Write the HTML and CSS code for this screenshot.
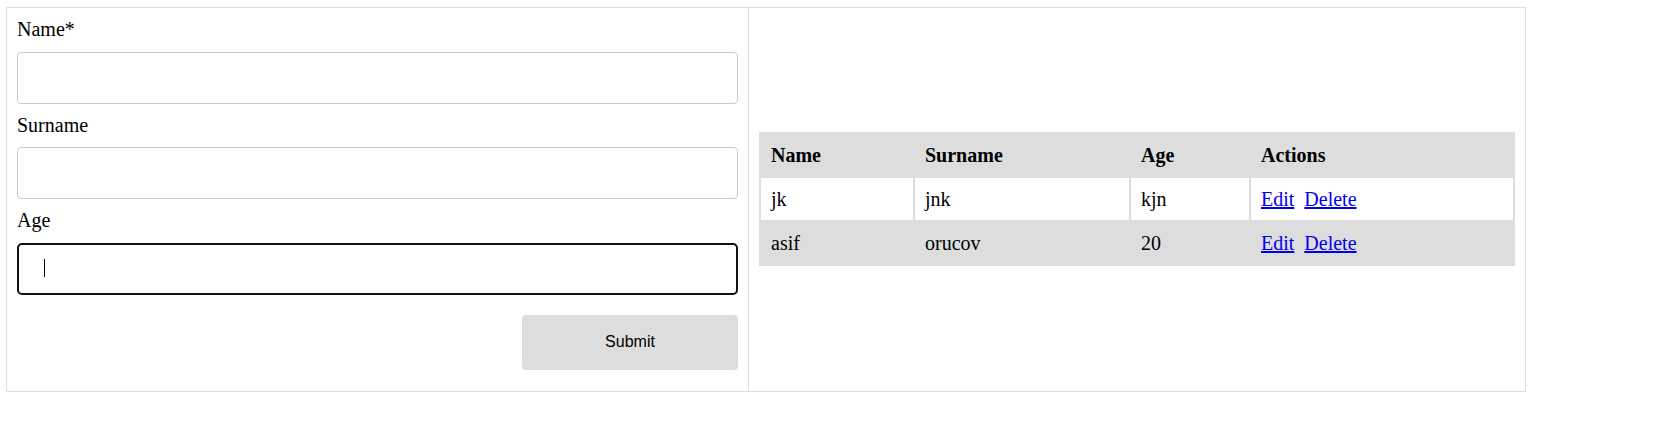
FILE: index.html
```html
<!DOCTYPE html>
<html lang="en">
<head>
<meta charset="utf-8">
<title>Users</title>
<link rel="stylesheet" href="styles.css">
</head>
<body>
<div class="container">
  <form class="form-col">
    <label class="field-label" for="name">Name*</label>
    <input class="field-input" id="name" type="text">
    <label class="field-label" for="surname">Surname</label>
    <input class="field-input" id="surname" type="text">
    <label class="field-label" for="age">Age</label>
    <div class="field-wrap">
      <input class="field-input field-input--focused" id="age" type="text">
      <span class="caret"></span>
    </div>
    <div class="actions-row">
      <button class="submit-btn" type="button">Submit</button>
    </div>
  </form>
  <div class="table-col">
    <table class="users-table">
      <thead>
        <tr>
          <th class="col-name">Name</th>
          <th class="col-surname">Surname</th>
          <th class="col-age">Age</th>
          <th>Actions</th>
        </tr>
      </thead>
      <tbody>
        <tr>
          <td>jk</td>
          <td>jnk</td>
          <td>kjn</td>
          <td><a href="#" class="row-link">Edit</a> <a href="#" class="row-link">Delete</a></td>
        </tr>
        <tr>
          <td>asif</td>
          <td>orucov</td>
          <td>20</td>
          <td><a href="#" class="row-link">Edit</a> <a href="#" class="row-link">Delete</a></td>
        </tr>
      </tbody>
    </table>
  </div>
</div>
</body>
</html>
```

FILE: styles.css
```css
html, body {
  margin: 0;
  padding: 0;
  background: #fff;
}

body {
  font-family: "Liberation Serif", "Times New Roman", serif;
  font-size: 20px;
  color: #000;
}

.container {
  display: flex;
  width: 1520px;
  box-sizing: border-box;
  margin: 7px 0 0 6px;
  border: 1px solid #dddddd;
}

.form-col {
  width: 742px;
  box-sizing: border-box;
  padding: 10px 10px 21px 10px;
  border-right: 1px solid #dddddd;
  display: flex;
  flex-direction: column;
  margin: 0;
}

.field-label {
  display: block;
  line-height: 23.5px;
  margin-bottom: 10px;
}

.field-input {
  display: block;
  width: 100%;
  height: 52px;
  box-sizing: border-box;
  margin: 0 0 10px 0;
  padding: 0 25px;
  border: 1px solid #cccccc;
  border-radius: 4px;
  font-family: "Liberation Serif", serif;
  font-size: 20px;
  background: #fff;
}

.field-wrap {
  position: relative;
}

.field-input--focused {
  border: 2px solid #111111;
  border-radius: 5px;
  margin-bottom: 0;
  outline: none;
}

.caret {
  position: absolute;
  left: 27px;
  top: 16px;
  width: 1px;
  height: 18px;
  background: #000;
}

.actions-row {
  display: flex;
  justify-content: flex-end;
  margin-top: 20px;
}

.submit-btn {
  width: 216px;
  height: 55px;
  border: none;
  border-radius: 4px;
  background: #dddddd;
  color: #000;
  font-family: "Liberation Sans", Arial, sans-serif;
  font-size: 16px;
  padding: 0;
}

.table-col {
  flex: 1;
  padding: 10px;
  display: flex;
  align-items: center;
}

.users-table {
  width: 100%;
  border-collapse: separate;
  border-spacing: 2px;
  background: #dddddd;
}

.users-table th,
.users-table td {
  text-align: left;
  padding: 10px;
  line-height: 22px;
  font-size: 20px;
}

.users-table th {
  font-weight: bold;
  background: #dddddd;
}

.col-name { width: 132px; }
.col-surname { width: 194px; }
.col-age { width: 98px; }

.users-table tbody tr:nth-child(odd) td {
  background: #ffffff;
}

.row-link {
  color: #0000ee;
  text-decoration: underline;
  margin-right: 5px;
}
```
